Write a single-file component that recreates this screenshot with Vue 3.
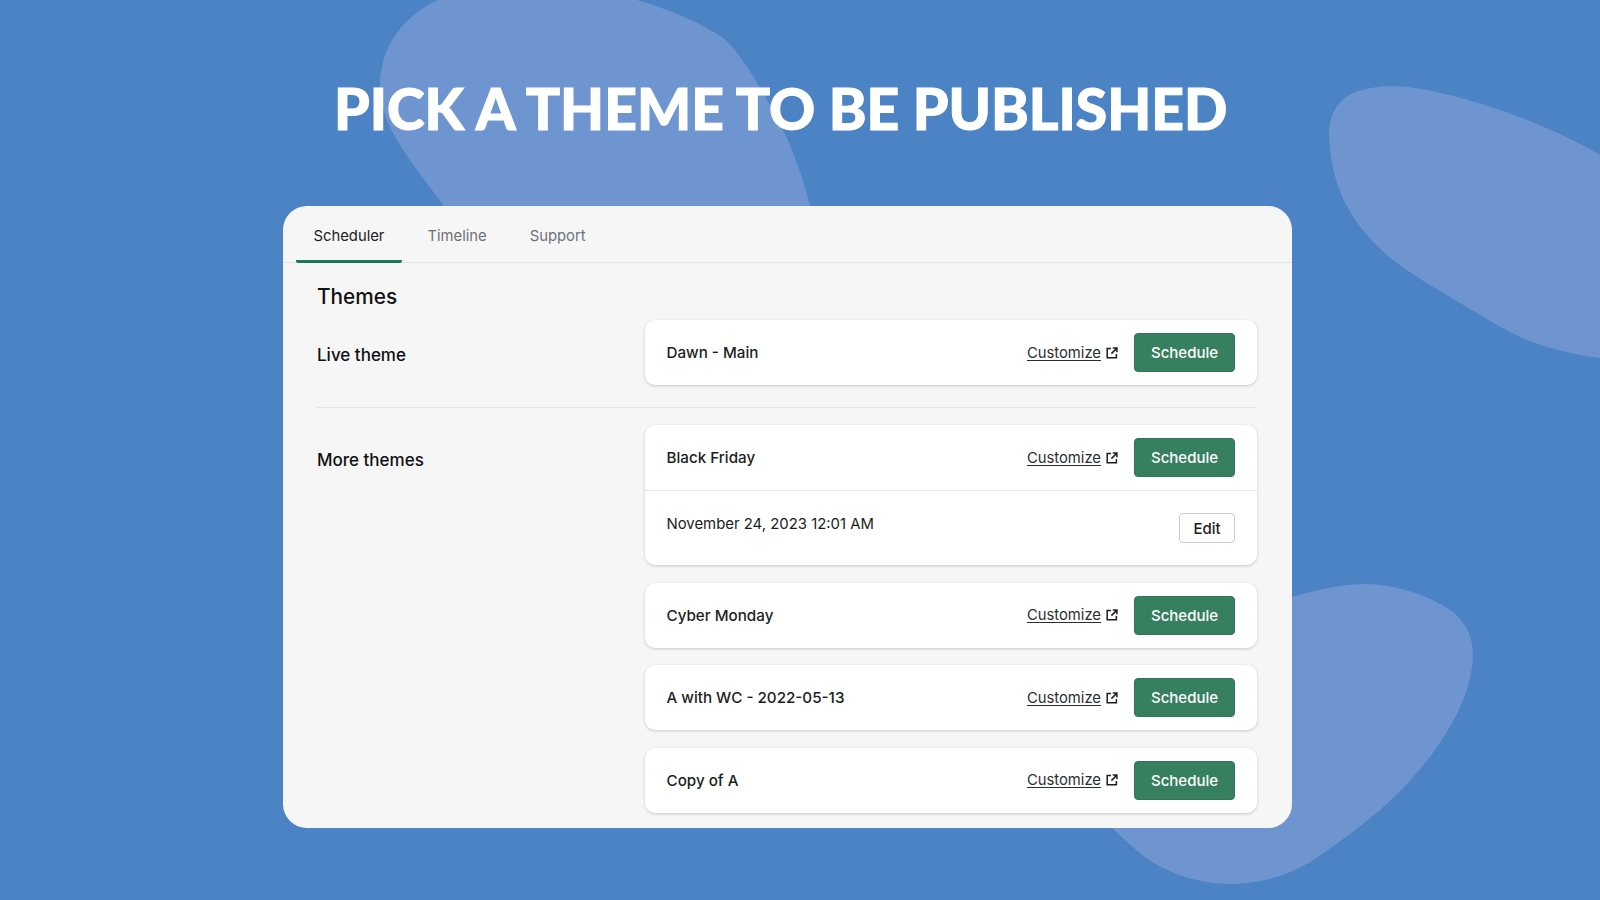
<script setup>
const more = [
  { name: 'Black Friday', date: 'November 24, 2023 12:01 AM' },
  { name: 'Cyber Monday' },
  { name: 'A with WC - 2022-05-13' },
  { name: 'Copy of A' },
]
</script>

<template>
  <div class="stage">
    <svg class="blobs" viewBox="0 0 1600 900" aria-hidden="true">
      <path d="M438 0L637 0C665 8 700 22 723 38C740 50 772 105 790 145C798 165 805 185 811 210L447 210C425 180 400 150 388 123C382 108 380 95 380 83C381 45 405 15 438 0Z" />
      <path d="M1329 133C1331 100 1350 87 1393 86C1430 87 1490 105 1527 120C1555 131 1580 143 1600 155L1600 358C1575 355 1545 348 1520 337C1500 327 1480 315 1460 303C1435 288 1415 277 1393 260C1350 225 1330 185 1329 133Z" />
      <path d="M1270 604C1300 594 1335 584 1365 584C1400 585 1430 596 1453 612C1468 625 1473 640 1473 655C1472 692 1452 727 1430 757C1410 782 1395 797 1380 810C1360 827 1340 842 1313 860C1295 872 1265 884 1230 884C1195 884 1160 870 1140 853C1128 843 1120 836 1100 815Z" />
    </svg>
    <h1 class="title">PICK A THEME TO BE PUBLISHED</h1>
    <main class="panel">
      <nav class="tabs">
        <a class="tab active">Scheduler</a>
        <a class="tab">Timeline</a>
        <a class="tab">Support</a>
      </nav>
      <div class="content">
        <h2 class="heading">Themes</h2>
        <section class="row first">
          <h3 class="label">Live theme</h3>
          <div class="cards">
            <article class="card">
              <div class="head">
                <span class="name">Dawn - Main</span>
                <a class="link"><u>Customize</u>
                  <svg class="ext" viewBox="0 0 12 12" aria-hidden="true">
                    <path d="M5 1.6H1.2v9.2h9.2V7M6.8 1.1h4.1v4.1M10.6 1.4 5.4 6.6" />
                  </svg>
                </a>
                <button class="primary">Schedule</button>
              </div>
            </article>
          </div>
        </section>
        <hr class="rule" />
        <section class="row">
          <h3 class="label">More themes</h3>
          <div class="cards">
            <article v-for="t in more" :key="t.name" class="card">
              <div class="head">
                <span class="name">{{ t.name }}</span>
                <a class="link"><u>Customize</u>
                  <svg class="ext" viewBox="0 0 12 12" aria-hidden="true">
                    <path d="M5 1.6H1.2v9.2h9.2V7M6.8 1.1h4.1v4.1M10.6 1.4 5.4 6.6" />
                  </svg>
                </a>
                <button class="primary">Schedule</button>
              </div>
              <div v-if="t.date" class="when">
                <span>{{ t.date }}</span>
                <button class="plain">Edit</button>
              </div>
            </article>
          </div>
        </section>
      </div>
    </main>
  </div>
</template>

<style>
html, body { margin: 0; }
</style>

<style scoped>
.stage {
  position: relative;
  width: 1600px;
  height: 900px;
  overflow: hidden;
  background: #4c83c4;
  box-sizing: border-box;
  padding: 72px 0 0 282.5px;
  font-family: Inter, "Liberation Sans", sans-serif;
  color: #1b1e21;
}
.blobs {
  position: absolute;
  inset: 0;
  width: 1600px;
  height: 900px;
}
.blobs path { fill: #6f95d0; }
.title {
  position: relative;
  margin: 0 0 0 51.5px;
  height: 72px;
  line-height: 72px;
  font-family: Lato, sans-serif;
  font-weight: 900;
  font-size: 57px;
  color: #fff;
  -webkit-text-stroke: 1px #fff;
  white-space: nowrap;
}
.panel {
  position: relative;
  margin-top: 62px;
  width: 1009.5px;
  height: 622px;
  background: #f6f6f7;
  border-radius: 24px;
  overflow: hidden;
}
.tabs {
  display: flex;
  gap: 8px;
  height: 57px;
  box-sizing: border-box;
  padding-left: 13.5px;
  border-bottom: 1px solid #e3e4e6;
}
.tab {
  height: 57px;
  box-sizing: border-box;
  padding: 0 17.5px;
  line-height: 60px;
  font-size: 14.8px;
  font-weight: 400;
  color: #6d7175;
  border-radius: 2px;
}
.tab.active {
  color: #202223;
  border-bottom: 3px solid #1c7a55;
}
.content {
  padding: 20px 35px 0 34.5px;
}
.heading {
  margin: 0;
  height: 27px;
  line-height: 27px;
  font-size: 20.8px;
  font-weight: 500;
  color: #111;
}
.row {
  display: grid;
  grid-template-columns: 328px 612px;
}
.row.first { margin-top: 10px; }
.label {
  margin: 0;
  padding-top: 24px;
  line-height: 22px;
  font-size: 17px;
  font-weight: 500;
  color: #111;
}
.rule {
  margin: 22px 0 17px;
  height: 1px;
  border: 0;
  background: #e3e4e6;
}
.cards {
  display: flex;
  flex-direction: column;
  gap: 17.5px;
}
.card {
  background: #fff;
  border-radius: 10px;
  box-shadow: 0 1px 3px rgba(63, 63, 68, 0.25);
}
.head {
  display: flex;
  align-items: center;
  height: 65px;
  box-sizing: border-box;
  padding: 0 22px 0 21.5px;
}
.name {
  flex: 1;
  font-size: 15.2px;
  font-weight: 500;
  color: #1b1e21;
}
.link {
  display: flex;
  align-items: center;
  gap: 5px;
  margin-right: 16px;
  font-size: 14.8px;
  color: #2b2e31;
}
.link u { text-underline-offset: 2px; }
.ext {
  width: 12px;
  height: 12px;
  fill: none;
  stroke: #1b1e21;
  stroke-width: 1.5;
}
.primary {
  width: 101px;
  height: 39px;
  padding: 0;
  border: 1px solid #2f7557;
  border-radius: 4px;
  background: #37805f;
  color: #fff;
  font: 500 15px Inter, sans-serif;
}
.when {
  display: flex;
  justify-content: space-between;
  align-items: flex-start;
  height: 75px;
  box-sizing: border-box;
  padding: 22px 22px 0 21.5px;
  border-top: 1px solid #e3e4e6;
  font-size: 14.9px;
  line-height: 22px;
  color: #1b1e21;
}
.plain {
  width: 56px;
  height: 30px;
  padding: 0;
  border: 1px solid #c9ccd0;
  border-radius: 4px;
  background: #fff;
  color: #1b1e21;
  font: 500 15px Inter, sans-serif;
}
</style>
